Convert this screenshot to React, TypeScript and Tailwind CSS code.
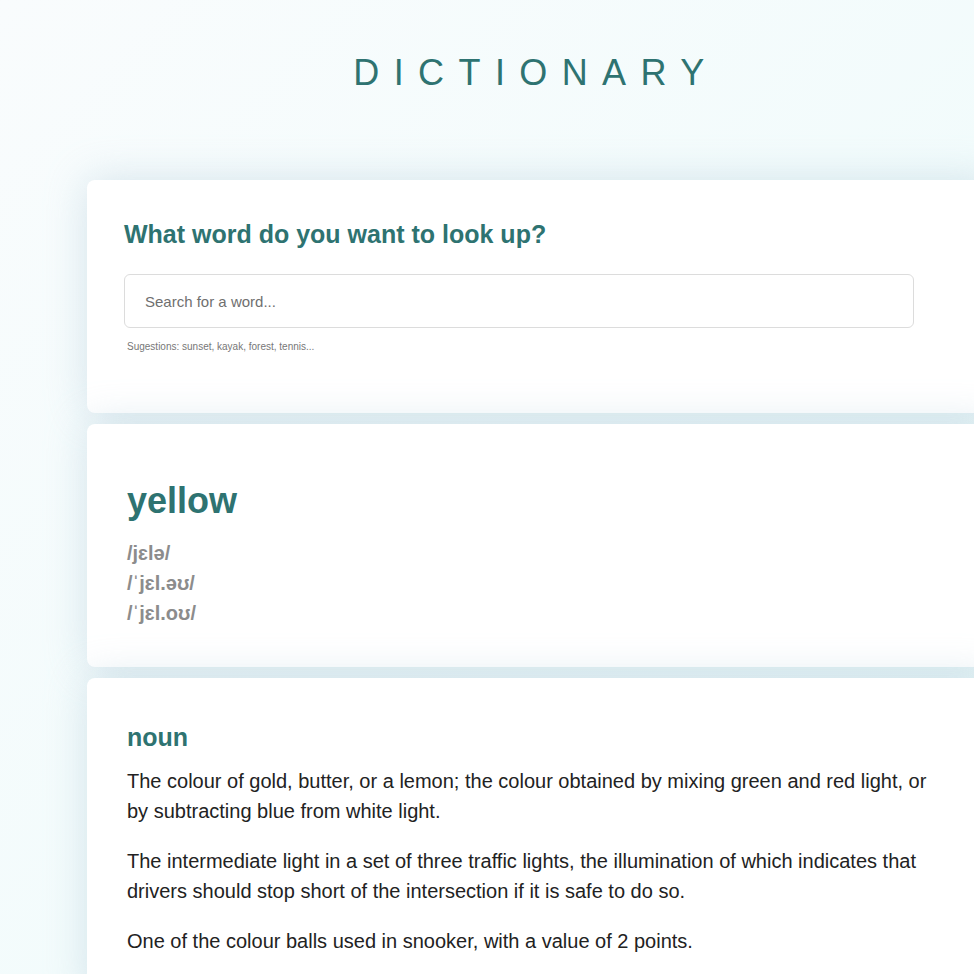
const DEFINITIONS = [
  "The colour of gold, butter, or a lemon; the colour obtained by mixing green and red light, or by subtracting blue from white light.",
  "The intermediate light in a set of three traffic lights, the illumination of which indicates that drivers should stop short of the intersection if it is safe to do so.",
  "One of the colour balls used in snooker, with a value of 2 points.",
]

const PHONETICS = ["/jɛlə/", "/ˈjɛl.əʊ/", "/ˈjɛl.oʊ/"]

export default function App() {
  return (
    <div className="min-h-screen overflow-hidden bg-gradient-to-br from-[#f9fcfd] to-[#edfbfb] font-['Liberation_Sans',Arial,sans-serif]">
      <div className="w-[1082px] pb-10">
        <header className="pt-[52px] pb-[87px] pr-[10px] text-center">
          <h1 className="text-[36px] leading-[1.15] tracking-[0.4em] text-[#2e7371]">DICTIONARY</h1>
        </header>

        <main className="flex flex-col gap-[11px] pl-[87px] pr-[87px]">
          {/* search */}
          <section className="bg-white rounded-lg pt-[40px] pb-[60px] pl-[37px] pr-10 shadow-[0_0_40px_rgba(170,200,215,0.45)]">
            <h2 className="text-[25px] leading-[1.15] font-bold text-[#2e7371] mb-[25px]">What word do you want to look up?</h2>
            <input
              type="text"
              placeholder="Search for a word..."
              className="w-[790px] h-[54px] rounded-md border border-[#dcdcdc] px-5 text-[15px] text-[#333] placeholder:text-[#6f6f6f] outline-none"
            />
            <p className="mt-[13px] ml-[3px] text-[10px] leading-[1.15] text-[#777]">Sugestions: sunset, kayak, forest, tennis...</p>
          </section>

          {/* word */}
          <section className="bg-white rounded-lg pt-[56px] pb-[39px] px-10 shadow-[0_0_40px_rgba(170,200,215,0.45)]">
            <h2 className="text-[36px] leading-[41px] font-bold text-[#2e7371] mb-[17px]">yellow</h2>
            {PHONETICS.map((p) => (
              <p key={p} className="text-[20px] leading-[30px] font-bold text-[#8c8c8c]">{p}</p>
            ))}
          </section>

          {/* meanings */}
          <section className="bg-white rounded-lg pt-[45px] pb-10 pl-10 pr-[58px] shadow-[0_0_40px_rgba(170,200,215,0.45)]">
            <h3 className="text-[25px] leading-[28px] font-bold text-[#2e7371] mb-[15px]">noun</h3>
            <div className="flex flex-col gap-5">
              {DEFINITIONS.map((d) => (
                <p key={d} className="text-[20px] leading-[30px] text-[#222]">{d}</p>
              ))}
            </div>
          </section>
        </main>
      </div>
    </div>
  )
}
